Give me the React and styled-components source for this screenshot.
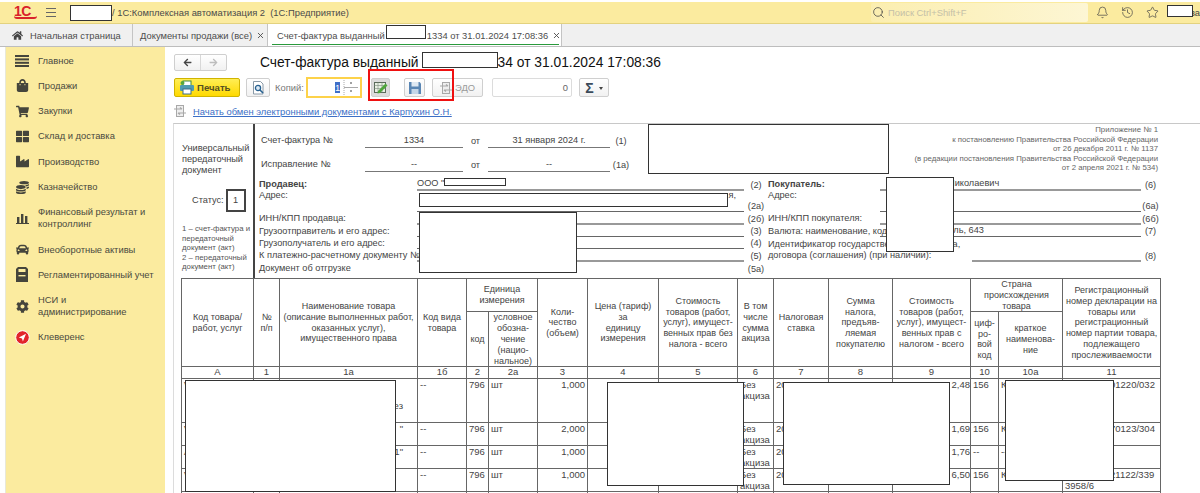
import React from "react";
import styled, { createGlobalStyle } from "styled-components";
import { Bell, History, Star, Search, X } from "lucide-react";
import {
  FaHome,
  FaShoppingBag,
  FaShoppingCart,
  FaThLarge,
  FaIndustry,
  FaCoins,
  FaCar,
  FaCog,
  FaArrowLeft,
  FaArrowRight,
} from "react-icons/fa";

const GlobalStyle = createGlobalStyle`
  html, body { margin: 0; padding: 0; background: #fff; }
  body { font-family: "Liberation Sans", Arial, sans-serif; color: #444; }
  * { box-sizing: border-box; }
`;

const Root = styled.div`
  position: relative;
  width: 1200px;
  height: 493px;
  overflow: hidden;
  display: flex;
  flex-direction: column;
  padding-top: 2px;
`;

const Header = styled.header`
  height: 22px;
  flex: none;
  display: flex;
  align-items: center;
  background: #fbeb9f;
  border-bottom: 1px solid #e3d27f;
  padding-left: 14px;
  font-size: 9.4px;
  color: #4a4a4a;
`;

const Logo = styled.span`
  width: 23px;
  font-size: 14px;
  line-height: 12px;
  font-weight: 700;
  letter-spacing: -0.5px;
  color: #d9232b;
  border-bottom: 2px solid #d9232b;
  border-radius: 0 0 3px 3px;
  margin-top: -2px;
`;

const Burger = styled.span`
  width: 10px;
  height: 9px;
  margin-left: 9px;
  border-top: 1px solid #666;
  border-bottom: 1px solid #666;
  position: relative;
  &::after {
    content: "";
    position: absolute;
    left: 0;
    right: 0;
    top: 3px;
    border-top: 1px solid #666;
  }
`;

const AppTitle = styled.span`
  margin-left: 56px;
  white-space: pre;
`;

const SearchBox = styled.div`
  margin-left: auto;
  width: 217px;
  height: 19px;
  display: flex;
  align-items: center;
  gap: 3px;
  padding-left: 1px;
  border-radius: 2px;
  color: #c4c0a8;
  background: linear-gradient(90deg, #fbeeb0, #fdf6d4);
  svg { color: #444; }
`;

const HeaderIcons = styled.div`
  width: 112px;
  display: flex;
  align-items: center;
  gap: 12px;
  padding-left: 8px;
  color: #444;
`;

const Cropped = styled.span`
  margin-left: auto;
  font-size: 9.4px;
`;

const Tabs = styled.nav`
  height: 23px;
  flex: none;
  display: flex;
  background: #f0f0f0;
  border-bottom: 1px solid #bdbdbd;
`;

const Tab = styled.div`
  width: ${(p) => p.$w}px;
  display: flex;
  align-items: center;
  gap: 4px;
  white-space: pre;
  font-size: 9.4px;
  padding-left: ${(p) => p.$pl}px;
  color: #4d4d4d;
  background: ${(p) => (p.$active ? "#fff" : "transparent")};
  border-right: 1px solid #c4c4c4;
  position: relative;
  ${(p) =>
    p.$active &&
    `&::after {
      content: "";
      position: absolute;
      left: 4px;
      right: 2px;
      bottom: 1px;
      border-bottom: 1px solid #2a9a3c;
    }`}
  svg { flex: none; }
`;

const TabGap = styled.span`
  display: inline-block;
  width: ${(p) => p.$w}px;
`;

const HomeLabel = styled.span`
  margin-left: 3px;
`;

const Body = styled.div`
  flex: 1;
  min-height: 0;
  display: flex;
`;

const Sidebar = styled.aside`
  width: 160px;
  margin-left: 5px;
  flex: none;
  background: #fbeb9f;
  padding-top: 1px;
  border-left: 1px solid #e8e8d8;
`;

const NavItem = styled.div`
  display: grid;
  grid-template-columns: 32px 1fr;
  align-items: center;
  padding: 6.65px 0;
  font-size: 9.4px;
  line-height: 12px;
  color: #4a4a40;
  white-space: pre-line;
`;

const NavIcon = styled.span`
  height: 12px;
  display: flex;
  align-items: center;
  justify-content: center;
  color: #45453c;
`;

const Content = styled.main`
  flex: 1;
  min-width: 0;
  display: flex;
  flex-direction: column;
  padding-left: 8px;
`;

const TitleRow = styled.div`
  height: 16px;
  margin-top: 7px;
  display: flex;
  align-items: center;
  padding-left: 1px;
`;

const NavGroup = styled.div`
  width: 53px;
  height: 17px;
  display: flex;
  border: 1px solid #cfcfcf;
  border-radius: 2px;
  background: linear-gradient(#fff, #f1f1f1);
`;

const NavArrow = styled.span`
  flex: 1;
  display: flex;
  align-items: center;
  justify-content: center;
  color: ${(p) => (p.$off ? "#bdbdbd" : "#444")};
  & + & { border-left: 1px solid #d8d8d8; }
`;

const Title = styled.h1`
  margin: 0 0 0 33px;
  font-size: 13.8px;
  font-weight: 400;
  color: #111;
  white-space: pre;
`;

const TitleGap = styled.span`
  display: inline-block;
  width: ${(p) => p.$w}px;
`;

const ToolRow = styled.div`
  height: 21px;
  margin-top: 7px;
  display: flex;
  align-items: center;
  padding-left: 1px;
`;

const PrintButton = styled.button`
  width: 66px;
  height: 19px;
  padding: 0 0 0 4px;
  display: flex;
  align-items: center;
  gap: 2px;
  border: 1px solid #d0b400;
  border-radius: 2px;
  background: linear-gradient(#ffee55, #ffd900);
  font: 700 9.6px "Liberation Sans", Arial, sans-serif;
  color: #555022;
`;

const ToolButton = styled.button`
  width: ${(p) => p.$w}px;
  height: 19px;
  margin-left: ${(p) => p.$ml}px;
  padding: 0;
  display: flex;
  align-items: center;
  justify-content: center;
  gap: ${(p) => p.$gap || 0}px;
  border: 1px solid #cfcfcf;
  border-radius: 2px;
  background: ${(p) => (p.$active ? "#dcdcdc" : "linear-gradient(#fff, #f1f1f1)")};
  font: 9.4px "Liberation Sans", Arial, sans-serif;
  color: #9a9a9a;
`;

const CopiesLabel = styled.span`
  margin-left: 5px;
  width: 31px;
  font-size: 9.4px;
  color: #777;
`;

const CopiesInput = styled.div`
  width: 56px;
  height: 21px;
  display: flex;
  align-items: center;
  justify-content: flex-end;
  border: 2px solid #fdd24a;
  font-size: 9.4px;
`;

const Selected = styled.span`
  width: 5px;
  height: 11px;
  line-height: 11px;
  background: #3f6fc8;
  color: #fff;
  text-align: center;
`;

const Spinner = styled.svg`
  width: 15px;
  height: 15px;
  margin: 0 2px 0 3px;
`;

const NumberField = styled.div`
  width: 80px;
  height: 19px;
  margin-left: 9px;
  padding-right: 3px;
  border: 1px solid #dcdcdc;
  border-radius: 2px;
  font-size: 9.4px;
  line-height: 17px;
  text-align: right;
  color: #666;
`;

const Sigma = styled.span`
  font-size: 14px;
  font-weight: 700;
  color: #3a4a5a;
`;

const Caret = styled.span`
  width: 0;
  height: 0;
  border: 2px solid transparent;
  border-top: 3px solid #444;
  margin-top: 3px;
`;

const LinkRow = styled.div`
  height: 14px;
  margin-top: 6px;
  display: flex;
  align-items: center;
  gap: 7px;
  padding-left: 1px;
`;

const ExchangeLink = styled.a`
  font-size: 9.4px;
  color: #3c6fc6;
  text-decoration: underline;
`;

const Sheet = styled.section`
  flex: 1;
  min-height: 0;
  margin-top: 5px;
  padding-left: 7px;
  border-top: 1px solid #c8c8c8;
  border-left: 1px solid #dcdcdc;
  font-size: 9.2px;
  line-height: 11px;
  color: #444;
`;

const Form = styled.div`
  height: 154px;
  display: grid;
  grid-template-columns: 72px 1fr;
`;

const LeftPanel = styled.div`
  padding: 19px 0 0 1px;
  border-right: 2px solid #444;
  margin-right: -2px;
`;

const Status = styled.div`
  margin: 13px 0 0 10px;
  display: flex;
  align-items: center;
  gap: 2px;
`;

const StatusBox = styled.span`
  width: 20px;
  height: 23px;
  display: flex;
  align-items: center;
  justify-content: center;
  border: 2px solid #444;
`;

const StatusNote = styled.div`
  margin-top: 12px;
  font-size: 7.8px;
  line-height: 9.6px;
  color: #555;
  white-space: pre;
`;

const FormMain = styled.div`
  padding-left: 6px;
`;

const TopRow = styled.div`
  height: 54px;
  display: flex;
  justify-content: space-between;
`;

const InvoiceRow = styled.div`
  height: 24px;
  display: grid;
  grid-template-columns: 106px 98px 25px 122px 22px;
  align-items: end;
  text-align: center;
`;

const InvoiceLabel = styled.span`
  padding-left: 2px;
  padding-bottom: 2px;
  text-align: left;
`;

const InvoiceValue = styled.span`
  padding-bottom: 1px;
  border-bottom: 1px solid #777;
`;

const InvoicePlain = styled.span`
  padding-bottom: 1px;
  white-space: nowrap;
`;

const Note = styled.div`
  width: 300px;
  margin-right: 42px;
  padding-top: 1px;
  font-size: 7.8px;
  line-height: 9.6px;
  color: #666;
  text-align: right;
`;

const Party = styled.div`
  display: grid;
  grid-template-columns: 509px 392px;
`;

const PartyRow = styled.div`
  height: ${(p) => p.$h}px;
  display: grid;
  grid-template-columns: ${(p) => p.$cols};
  align-items: stretch;
`;

const PartyLabel = styled.div`
  align-self: ${(p) => (p.$top ? "start" : "center")};
  font-weight: ${(p) => (p.$bold ? 700 : 400)};
  white-space: pre;
  min-width: 0;
`;

const PartyValue = styled.div`
  min-width: 0;
  padding-left: ${(p) => p.$pl || 0}px;
  padding-right: ${(p) => p.$pr || 0}px;
  margin-left: ${(p) => p.$ml || 0}px;
  text-align: ${(p) => p.$align || "left"};
  border-bottom: ${(p) => (p.$soft ? "2px solid #999" : "1px solid #666")};
  white-space: pre;
`;

const PartyNum = styled.div`
  align-self: end;
  text-align: center;
  white-space: nowrap;
`;

const Invoice = styled.table`
  table-layout: fixed;
  width: 979px;
  border-collapse: collapse;
  font-size: 9.5px;
  line-height: 10.5px;
  th, td {
    border: 1px solid #666;
    padding: 0;
    font-weight: 400;
    overflow: hidden;
  }
  th {
    font-size: 9px;
    line-height: 10.8px;
    text-align: center;
    vertical-align: middle;
  }
  td { vertical-align: top; padding: 1px 2px 0; white-space: pre-line; }
`;

const Letter = styled.td`
  && { text-align: center; padding: 0; line-height: 10px; }
`;

const Cell = styled.td`
  && {
    text-align: ${(p) => p.$align || "left"};
    padding-right: ${(p) => (p.$pr === undefined ? 2 : p.$pr)}px;
    text-indent: ${(p) => p.$indent || 0}px;
  }
`;

const Redaction = styled.div`
  position: absolute;
  left: ${(p) => p.$x}px;
  top: ${(p) => p.$y}px;
  width: ${(p) => p.$w}px;
  height: ${(p) => p.$h}px;
  background: #fff;
  border: 1px solid #333;
`;

const Highlight = styled.div`
  position: absolute;
  left: 368px;
  top: 69px;
  width: 86px;
  height: 32px;
  border: 2px solid #ef1010;
`;

const Lines = () => (
  <svg width="14" height="12" viewBox="0 0 14 12" fill="#45453c">
    <rect y="0" width="14" height="2" />
    <rect y="3.4" width="14" height="2" />
    <rect y="6.8" width="14" height="2" />
    <rect y="10" width="14" height="2" />
  </svg>
);

const Bars = () => (
  <svg width="13" height="12" viewBox="0 0 13 12" fill="#45453c">
    <rect x="1" y="5" width="2.4" height="6" />
    <rect x="5" y="2" width="2.4" height="9" />
    <rect x="9" y="4" width="2.4" height="7" />
    <rect y="11" width="13" height="1" />
  </svg>
);

const Ledger = () => (
  <svg width="12" height="15" viewBox="0 0 12 15">
    <path d="M2 0h8l2 2v13H0V2z" fill="#45453c" />
    <rect x="2.5" y="2" width="7" height="3" fill="#fbeb9f" />
    <rect x="2.5" y="8" width="7" height="1.4" fill="#fbeb9f" />
  </svg>
);

const Kleverens = () => (
  <svg width="15" height="15" viewBox="0 0 15 15">
    <circle cx="7.5" cy="7.5" r="6.8" fill="#e2252c" stroke="#fff" strokeWidth="1" />
    <path d="M11 3.8 3.8 7.6l3.2.8.9 3.2z" fill="#fff" />
  </svg>
);

const PrinterIcon = () => (
  <svg width="16" height="15" viewBox="0 0 16 15">
    <rect x="4" y="1" width="8" height="5" fill="#fff" stroke="#3c8a45" />
    <rect x="1" y="5" width="14" height="6" rx="1" fill="#4f9bb0" />
    <rect x="4" y="9" width="8" height="5" fill="#fff" stroke="#3c6f8a" />
    <circle cx="3.5" cy="3" r="2" fill="#58a83c" />
  </svg>
);

const PreviewIcon = () => (
  <svg width="13" height="14" viewBox="0 0 13 14">
    <path d="M1.5.5h7l2.5 2.5v10h-9.500z" fill="#fff" stroke="#8a9aa8" />
    <circle cx="6" cy="7" r="2.600" fill="#dbe9f5" stroke="#26608f" strokeWidth="1.300" />
    <path d="M8 9l3 3" stroke="#26608f" strokeWidth="1.600" />
  </svg>
);

const EditIcon = () => (
  <svg width="14" height="13" viewBox="0 0 14 13">
    <rect x=".5" y="1.500" width="11" height="10" fill="#e9f0e4" stroke="#5a6a5a" />
    <path d="M.5 4.500h11M.5 7.500h11M4 1.500v10M8 1.500v10" stroke="#7d8d7d" strokeWidth=".6" />
    <path d="M4 10l7.500-7.500 2 2L6 12l-2.500.5z" fill="#4fa63c" />
  </svg>
);

const SaveIcon = () => (
  <svg width="12" height="12" viewBox="0 0 12 12">
    <path d="M0 0h10.500L12 1.500V12H0z" fill="#5a86b4" />
    <rect x="2.500" y="0" width="7" height="4.500" fill="#dfe9f3" />
    <rect x="2.500" y="7" width="7" height="5" fill="#c4d6e8" />
  </svg>
);

const ExchangeIcon = ({ size = 12 }) => (
  <svg width={size} height={size} viewBox="0 0 12 12" fill="none" stroke="#a8a8a8">
    <rect x="2.500" y=".5" width="7" height="11" fill="#eee" />
    <path d="M0 4h8M8 4 6 2.500M12 8H4M4 8l2 1.500" strokeWidth="1.200" />
  </svg>
);

const NAV = [
  [<Lines />, "Главное"],
  [<FaShoppingBag size={13} />, "Продажи"],
  [<FaShoppingCart size={13} />, "Закупки"],
  [<FaThLarge size={13} />, "Склад и доставка"],
  [<FaIndustry size={13} />, "Производство"],
  [<FaCoins size={13} />, "Казначейство"],
  [<Bars />, "Финансовый результат и\nконтроллинг"],
  [<FaCar size={13} />, "Внеоборотные активы"],
  [<Ledger />, "Регламентированный учет"],
  [<FaCog size={13} />, "НСИ и\nадминистрирование"],
  [<Kleverens />, "Клеверенс"],
];

const REDACTIONS = [
  [70, 5, 42, 16],
  [1167, 5, 26, 12],
  [386, 25, 40, 14],
  [422, 52, 76, 16],
  [648, 124, 241, 50],
  [444, 178, 62, 8],
  [419, 193, 309, 14],
  [419, 212, 158, 61],
  [886, 177, 68, 75],
  [185, 380, 211, 112],
  [607, 382, 137, 104],
  [783, 382, 167, 103],
  [1005, 380, 109, 101],
];

const ROWS = [
  { h: 44, a: "V", name: "\n\nез", qty: "1,000", total: "2,48", code: "156", country: "К", reg: "01220/032" },
  { h: 23, a: "V", name: '"', qty: "2,000", total: "1,69", code: "156", country: "К", reg: "70123/304" },
  { h: 22, a: "А", name: '1"', qty: "1,000", total: "1,76", code: "--", country: "--", reg: "" },
  { h: 22, a: "V", name: "", qty: "1,000", total: "6,50", code: "156", country: "К", reg: "21122/339 3958/6" },
];

const LETTERS = ["А", "1", "1а", "1б", "2", "2а", "3", "4", "5", "6", "7", "8", "9", "10", "10а", "11"];
const WIDTHS = [72, 26, 138, 49, 22, 49, 50, 71, 79, 36, 55, 64, 78, 28, 64, 98];

const SELLER_COLS = "158px 327px 24px";
const BUYER_COLS = "112px 261px 19px";

const App = () => {
  return (
    <Root>
      <GlobalStyle />
      <Header>
        <Logo>1С</Logo>
        <Burger />
        <AppTitle>/ 1С:Комплексная автоматизация 2  (1С:Предприятие)</AppTitle>
        <SearchBox>
          <Search size={13} strokeWidth={1.4} />
          Поиск Ctrl+Shift+F
        </SearchBox>
        <HeaderIcons>
          <Bell size={13} strokeWidth={1.3} />
          <History size={13} strokeWidth={1.3} />
          <Star size={13} strokeWidth={1.3} />
          <Cropped>ва</Cropped>
        </HeaderIcons>
      </Header>

      <Tabs>
        <Tab $w={133} $pl={12}>
          <FaHome size={11} color="#444" />
          <HomeLabel>Начальная страница</HomeLabel>
        </Tab>
        <Tab $w={135} $pl={7}>
          Документы продажи (все)
          <X size={9} strokeWidth={2.4} />
        </Tab>
        <Tab $w={294} $pl={9} $active>
          <span>
            Счет-фактура выданный
            <TabGap $w={42} />
            1334 от 31.01.2024 17:08:36
          </span>
          <X size={9} strokeWidth={2.4} />
        </Tab>
      </Tabs>

      <Body>
        <Sidebar>
          {NAV.map(([icon, label]) => (
            <NavItem key={label}>
              <NavIcon>{icon}</NavIcon>
              <span>{label}</span>
            </NavItem>
          ))}
        </Sidebar>

        <Content>
          <TitleRow>
            <NavGroup>
              <NavArrow>
                <FaArrowLeft size={9} />
              </NavArrow>
              <NavArrow $off>
                <FaArrowRight size={9} />
              </NavArrow>
            </NavGroup>
            <Title>
              Счет-фактура выданный В
              <TitleGap $w={66} />
              34 от 31.01.2024 17:08:36
            </Title>
          </TitleRow>

          <ToolRow>
            <PrintButton>
              <PrinterIcon />
              Печать
            </PrintButton>
            <ToolButton $w={24} $ml={6}>
              <PreviewIcon />
            </ToolButton>
            <CopiesLabel>Копий:</CopiesLabel>
            <CopiesInput>
              <Selected>1</Selected>
              <Spinner viewBox="0 0 15 15">
                <path d="M1 0v15" stroke="#aaa" strokeDasharray="1 1" />
                <path d="M1 7.500h14" stroke="#aaa" />
                <path d="M7 3h2M7 11h2" stroke="#444" />
              </Spinner>
            </CopiesInput>
            <ToolButton $w={19} $ml={9} $active>
              <EditIcon />
            </ToolButton>
            <ToolButton $w={21} $ml={14}>
              <SaveIcon />
            </ToolButton>
            <ToolButton $w={51} $ml={7} $gap={3}>
              <ExchangeIcon />
              ЭДО
            </ToolButton>
            <NumberField>0</NumberField>
            <ToolButton $w={30} $ml={7} $gap={5}>
              <Sigma>Σ</Sigma>
              <Caret />
            </ToolButton>
          </ToolRow>

          <LinkRow>
            <ExchangeIcon />
            <ExchangeLink>Начать обмен электронными документами с Карпухин О.Н.</ExchangeLink>
          </LinkRow>

          <Sheet>
            <Form>
              <LeftPanel>
                Универсальный
                <br />
                передаточный
                <br />
                документ
                <Status>
                  Статус:
                  <StatusBox>1</StatusBox>
                </Status>
                <StatusNote>
                  {"1 – счет-фактура и\nпередаточный\nдокумент (акт)\n2 – передаточный\nдокумент (акт)"}
                </StatusNote>
              </LeftPanel>

              <FormMain>
                <TopRow>
                  <div>
                    <InvoiceRow>
                      <InvoiceLabel>Счет-фактура №</InvoiceLabel>
                      <InvoiceValue>1334</InvoiceValue>
                      <InvoicePlain>от</InvoicePlain>
                      <InvoiceValue>31 января 2024 г.</InvoiceValue>
                      <InvoicePlain>(1)</InvoicePlain>
                    </InvoiceRow>
                    <InvoiceRow>
                      <InvoiceLabel>Исправление №</InvoiceLabel>
                      <InvoiceValue>--</InvoiceValue>
                      <InvoicePlain>от</InvoicePlain>
                      <InvoiceValue>--</InvoiceValue>
                      <InvoicePlain>(1а)</InvoicePlain>
                    </InvoiceRow>
                  </div>
                  <Note>
                    Приложение № 1
                    <br />
                    к постановлению Правительства Российской Федерации
                    <br />
                    от 26 декабря 2011 г. № 1137
                    <br />
                    (в редакции постановления Правительства Российской Федерации
                    <br />
                    от 2 апреля 2021 г. № 534)
                  </Note>
                </TopRow>

                <Party>
                  <div>
                    <PartyRow $h={12} $cols={SELLER_COLS}>
                      <PartyLabel $bold>Продавец:</PartyLabel>
                      <PartyValue $soft>ООО "</PartyValue>
                      <PartyNum>(2)</PartyNum>
                    </PartyRow>
                    <PartyRow $h={22} $cols={SELLER_COLS}>
                      <PartyLabel $top>Адрес:</PartyLabel>
                      <PartyValue $align="right" $pr={8}>я,</PartyValue>
                      <PartyNum>(2а)</PartyNum>
                    </PartyRow>
                    <PartyRow $h={13} $cols={SELLER_COLS}>
                      <PartyLabel>ИНН/КПП продавца:</PartyLabel>
                      <PartyValue $soft />
                      <PartyNum>(2б)</PartyNum>
                    </PartyRow>
                    <PartyRow $h={12} $cols={SELLER_COLS}>
                      <PartyLabel>Грузоотправитель и его адрес:</PartyLabel>
                      <PartyValue />
                      <PartyNum>(3)</PartyNum>
                    </PartyRow>
                    <PartyRow $h={12} $cols={SELLER_COLS}>
                      <PartyLabel>Грузополучатель и его адрес:</PartyLabel>
                      <PartyValue />
                      <PartyNum>(4)</PartyNum>
                    </PartyRow>
                    <PartyRow $h={13} $cols={SELLER_COLS}>
                      <PartyLabel>К платежно-расчетному документу №</PartyLabel>
                      <PartyValue $soft />
                      <PartyNum>(5)</PartyNum>
                    </PartyRow>
                    <PartyRow $h={13} $cols={SELLER_COLS}>
                      <PartyLabel>Документ об отгрузке</PartyLabel>
                      <span />
                      <PartyNum>(5а)</PartyNum>
                    </PartyRow>
                  </div>
                  <div>
                    <PartyRow $h={12} $cols={BUYER_COLS}>
                      <PartyLabel $bold>Покупатель:</PartyLabel>
                      <PartyValue $pl={68} $soft>Николаевич</PartyValue>
                      <PartyNum>(6)</PartyNum>
                    </PartyRow>
                    <PartyRow $h={22} $cols={BUYER_COLS}>
                      <PartyLabel $top>Адрес:</PartyLabel>
                      <PartyValue />
                      <PartyNum>(6а)</PartyNum>
                    </PartyRow>
                    <PartyRow $h={13} $cols={BUYER_COLS}>
                      <PartyLabel>ИНН/КПП покупателя:</PartyLabel>
                      <PartyValue $soft />
                      <PartyNum>(6б)</PartyNum>
                    </PartyRow>
                    <PartyRow $h={12} $cols={BUYER_COLS}>
                      <PartyLabel>Валюта: наименование, код</PartyLabel>
                      <PartyValue $pl={7}>Российский рубль, 643</PartyValue>
                      <PartyNum>(7)</PartyNum>
                    </PartyRow>
                    <PartyRow $h={25} $cols={BUYER_COLS}>
                      <PartyLabel>
                        {"Идентификатор государственного контракта,\nдоговора (соглашения) (при наличии):"}
                      </PartyLabel>
                      <PartyValue $ml={92} $soft />
                      <PartyNum>(8)</PartyNum>
                    </PartyRow>
                  </div>
                </Party>
              </FormMain>
            </Form>

            <Invoice>
              <colgroup>
                {WIDTHS.map((w, i) => (
                  <col key={i} width={w} />
                ))}
              </colgroup>
              <thead>
                <tr height="33">
                  <th rowSpan="2">Код товара/<br />работ, услуг</th>
                  <th rowSpan="2">№<br />п/п</th>
                  <th rowSpan="2">
                    Наименование товара<br />(описание выполненных работ,<br />оказанных услуг),<br />имущественного права
                  </th>
                  <th rowSpan="2">Код вида<br />товара</th>
                  <th colSpan="2">Единица<br />измерения</th>
                  <th rowSpan="2">Коли-<br />чество<br />(объем)</th>
                  <th rowSpan="2">Цена (тариф)<br />за<br />единицу<br />измерения</th>
                  <th rowSpan="2">
                    Стоимость<br />товаров (работ,<br />услуг), имущест-<br />венных прав без<br />налога - всего
                  </th>
                  <th rowSpan="2">В том<br />числе<br />сумма<br />акциза</th>
                  <th rowSpan="2">Налоговая<br />ставка</th>
                  <th rowSpan="2">Сумма<br />налога,<br />предъяв-<br />ляемая<br />покупателю</th>
                  <th rowSpan="2">
                    Стоимость<br />товаров (работ,<br />услуг), имущест-<br />венных прав с<br />налогом - всего
                  </th>
                  <th colSpan="2">Страна<br />происхождения<br />товара</th>
                  <th rowSpan="2">
                    Регистрационный<br />номер декларации на<br />товары или<br />регистрационный<br />номер партии товара,<br />подлежащего<br />прослеживаемости
                  </th>
                </tr>
                <tr height="55">
                  <th>код</th>
                  <th>условное<br />обозна-<br />чение<br />(нацио-<br />нальное)</th>
                  <th>циф-<br />ро-<br />вой<br />код</th>
                  <th>краткое<br />наименова-<br />ние</th>
                </tr>
                <tr height="12">
                  {LETTERS.map((l) => (
                    <Letter key={l}>{l}</Letter>
                  ))}
                </tr>
              </thead>
              <tbody>
                {ROWS.map((row, i) => (
                  <tr key={i} height={row.h}>
                    <Cell>{row.a}</Cell>
                    <Cell />
                    <Cell $align="right" $pr={14}>{row.name}</Cell>
                    <Cell>--</Cell>
                    <Cell $pr={0}>796</Cell>
                    <Cell>шт</Cell>
                    <Cell $align="right">{row.qty}</Cell>
                    <Cell />
                    <Cell />
                    <Cell>Без акциза</Cell>
                    <Cell>20%</Cell>
                    <Cell />
                    <Cell $align="right" $pr={0}>{row.total}</Cell>
                    <Cell>{row.code}</Cell>
                    <Cell>{row.country}</Cell>
                    <Cell $indent={45}>{row.reg}</Cell>
                  </tr>
                ))}
                <tr height="12">
                  {WIDTHS.map((w, i) => (
                    <Cell key={i} />
                  ))}
                </tr>
              </tbody>
            </Invoice>
          </Sheet>
        </Content>
      </Body>

      {REDACTIONS.map(([x, y, w, h]) => (
        <Redaction key={`${x}-${y}`} $x={x} $y={y} $w={w} $h={h} />
      ))}
      <Highlight />
    </Root>
  );
};

export default App;
